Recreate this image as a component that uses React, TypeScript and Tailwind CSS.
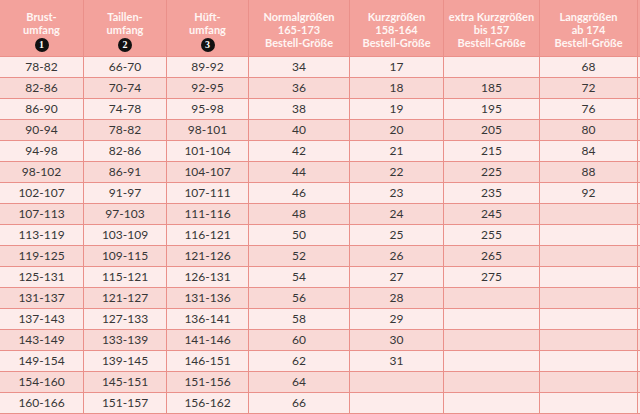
import React from 'react';

const rows: string[][] = [
  ['78-82', '66-70', '89-92', '34', '17', '', '68'],
  ['82-86', '70-74', '92-95', '36', '18', '185', '72'],
  ['86-90', '74-78', '95-98', '38', '19', '195', '76'],
  ['90-94', '78-82', '98-101', '40', '20', '205', '80'],
  ['94-98', '82-86', '101-104', '42', '21', '215', '84'],
  ['98-102', '86-91', '104-107', '44', '22', '225', '88'],
  ['102-107', '91-97', '107-111', '46', '23', '235', '92'],
  ['107-113', '97-103', '111-116', '48', '24', '245', ''],
  ['113-119', '103-109', '116-121', '50', '25', '255', ''],
  ['119-125', '109-115', '121-126', '52', '26', '265', ''],
  ['125-131', '115-121', '126-131', '54', '27', '275', ''],
  ['131-137', '121-127', '131-136', '56', '28', '', ''],
  ['137-143', '127-133', '136-141', '58', '29', '', ''],
  ['143-149', '133-139', '141-146', '60', '30', '', ''],
  ['149-154', '139-145', '146-151', '62', '31', '', ''],
  ['154-160', '145-151', '151-156', '64', '', '', ''],
  ['160-166', '151-157', '156-162', '66', '', '', ''],
];

const heads: { lines: string[]; badge?: string }[] = [
  { lines: ['Brust-', 'umfang'], badge: '1' },
  { lines: ['Taillen-', 'umfang'], badge: '2' },
  { lines: ['Hüft-', 'umfang'], badge: '3' },
  { lines: ['Normalgrößen', '165-173', 'Bestell-Größe'] },
  { lines: ['Kurzgrößen', '158-164', 'Bestell-Größe'] },
  { lines: ['extra Kurzgrößen', 'bis 157', 'Bestell-Größe'] },
  { lines: ['Langgrößen', 'ab 174', 'Bestell-Größe'] },
];

function Badge({ n }: { n: string }) {
  return (
    <span className="mt-[2px] flex h-[14px] w-[14px] items-center justify-center rounded-full bg-[#111] text-[10px] font-bold leading-none text-white [font-family:'Liberation_Serif',serif]">
      {n}
    </span>
  );
}

export default function App() {
  return (
    <div className="h-[414px] w-[640px] overflow-hidden bg-[#ea908a] [font-family:Lato,'Open_Sans',sans-serif]">
      <div className="grid grid-cols-[83px_82px_81px_100px_93px_95px_97px_2px] gap-px">
        {heads.map((h, i) => (
          <div
            key={i}
            className="flex h-[56px] flex-col items-center pt-[10px] text-[11px] font-bold leading-[13px] text-[#fff5f3] bg-[#f3a29c]"
          >
            {h.lines.map((l) => (
              <span key={l}>{l}</span>
            ))}
            {h.badge && <Badge n={h.badge} />}
          </div>
        ))}
        <div className="h-[56px] bg-[#f3a29c]" />
        {rows.map((r, ri) =>
          [...r, ''].map((c, ci) => (
            <div
              key={ri + '-' + ci}
              className={`flex h-[20px] items-center justify-center text-[12px] leading-none text-[#363636] ${
                ri % 2 === 0 ? 'bg-[#fdeceb]' : 'bg-[#f9d9d6]'
              }`}
            >
              {c}
            </div>
          ))
        )}
      </div>
    </div>
  );
}
